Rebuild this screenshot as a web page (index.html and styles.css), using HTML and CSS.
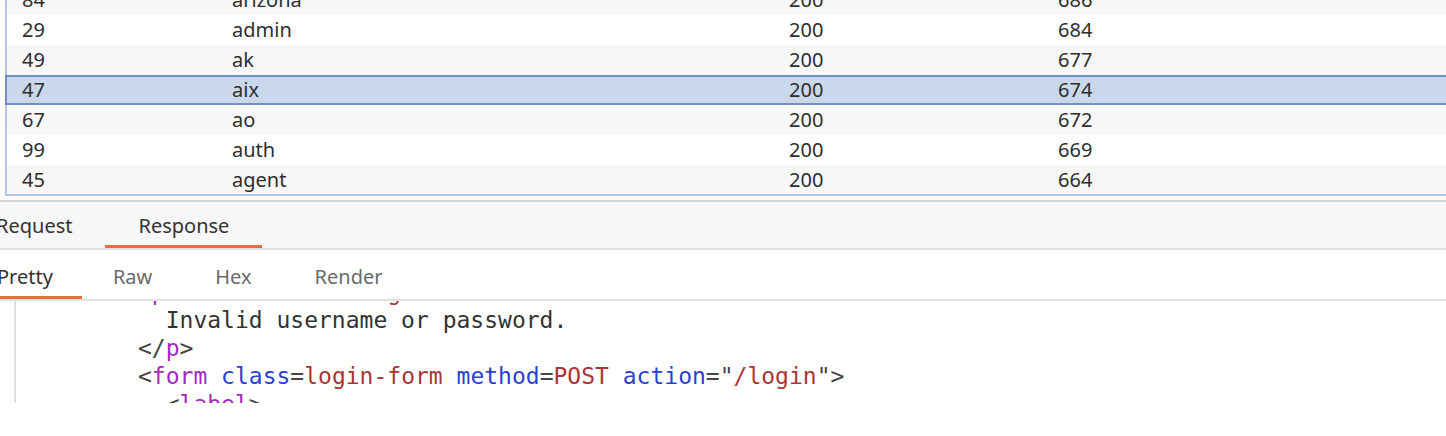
FILE: index.html
```html
<!DOCTYPE html>
<html lang="en">
<head>
<meta charset="utf-8">
<title>Intruder results</title>
<link rel="stylesheet" href="styles.css">
</head>
<body>
<div class="results">
  <div class="rows">
    <div class="row alt"><span>84</span><span>arizona</span><span>200</span><span>686</span></div>
    <div class="row"><span>29</span><span>admin</span><span>200</span><span>684</span></div>
    <div class="row alt"><span>49</span><span>ak</span><span>200</span><span>677</span></div>
    <div class="row selected"><span>47</span><span>aix</span><span>200</span><span>674</span></div>
    <div class="row alt"><span>67</span><span>ao</span><span>200</span><span>672</span></div>
    <div class="row"><span>99</span><span>auth</span><span>200</span><span>669</span></div>
    <div class="row alt"><span>45</span><span>agent</span><span>200</span><span>664</span></div>
  </div>
</div>
<div class="splitter"></div>
<div class="tabs">
  <div class="tab">Request</div>
  <div class="tab active">Response</div>
</div>
<div class="subtabs">
  <div class="subtab active">Pretty</div>
  <div class="subtab">Raw</div>
  <div class="subtab">Hex</div>
  <div class="subtab">Render</div>
</div>
<div class="editor">
  <div class="code"><div class="line"><span class="p">&lt;</span><span class="tag">p</span> <span class="attr">class</span><span class="p">=</span><span class="val">is-warning</span><span class="p">&gt;</span></div><div class="line">  <span class="txt">Invalid username or password.</span></div><div class="line"><span class="p">&lt;/</span><span class="tag">p</span><span class="p">&gt;</span></div><div class="line"><span class="p">&lt;</span><span class="tag">form</span> <span class="attr">class</span><span class="p">=</span><span class="val">login-form</span> <span class="attr">method</span><span class="p">=</span><span class="val">POST</span> <span class="attr">action</span><span class="p">="</span><span class="val">/login</span><span class="p">"&gt;</span></div><div class="line">  <span class="p">&lt;</span><span class="tag">label</span><span class="p">&gt;</span></div></div>
</div>
</body>
</html>
```

FILE: styles.css
```css
html, body {
  margin: 0;
  padding: 0;
  background: #ffffff;
}
body {
  width: 1446px;
  height: 436px;
  overflow: hidden;
  font-family: "Noto Sans", "Open Sans", sans-serif;
  font-size: 20px;
  color: #2e2e2e;
}
.results {
  height: 194px;
  margin-left: 5px;
  border-bottom: 2px solid #b3c7e4;
  overflow: hidden;
}
.rows {
  margin-top: -15px;
}
.row {
  display: grid;
  grid-template-columns: 210px 557px 269px 1fr;
  height: 30px;
  line-height: 30px;
  padding-left: 15px;
  border-left: 2px solid #b3c7e4;
  background: #ffffff;
}
.row.alt {
  background: #f7f7f7;
}
.row.selected {
  background: #cbd8eb;
  border-left-color: #6f8fc2;
  box-shadow: inset 0 2px 0 #7092c4, inset 0 -2px 0 #7092c4;
}
.splitter {
  height: 4px;
  background: #fafafa;
  border-bottom: 2px solid #d7d7d7;
}
.tabs {
  display: flex;
  height: 46px;
  background: #f7f7f7;
  border-bottom: 2px solid #e2e2e2;
  margin-left: -37px;
}
.tab {
  padding: 0 33px;
  line-height: 47px;
  color: #333333;
}
.tab.active {
  box-shadow: inset 0 -3px 0 #e8703c;
}
.subtabs {
  display: flex;
  height: 49px;
  background: #ffffff;
  border-bottom: 2px solid #e2e2e2;
  margin-left: -33px;
}
.subtab {
  padding: 0 32px 0 31px;
  line-height: 53px;
  color: #6a6a6a;
}
.subtab.active {
  color: #333333;
  padding: 0 29px 0 30px;
  box-shadow: inset 0 -3px 0 #e8703c;
}
.editor {
  height: 102px;
  padding-left: 14px;
  overflow: hidden;
}
.code {
  display: flow-root;
  height: 102px;
  border-left: 2px solid #dcdcdc;
  padding-left: 122px;
  font-family: "DejaVu Sans Mono", monospace;
  font-size: 23px;
  white-space: pre;
  color: #333333;
}
.line {
  height: 28px;
  line-height: 28px;
}
.line:first-child {
  margin-top: -23px;
}
.tag { color: #a22bbd; }
.attr { color: #2d3fd0; }
.val { color: #a83636; }
.p { color: #444444; }
.txt { color: #333333; }
```
